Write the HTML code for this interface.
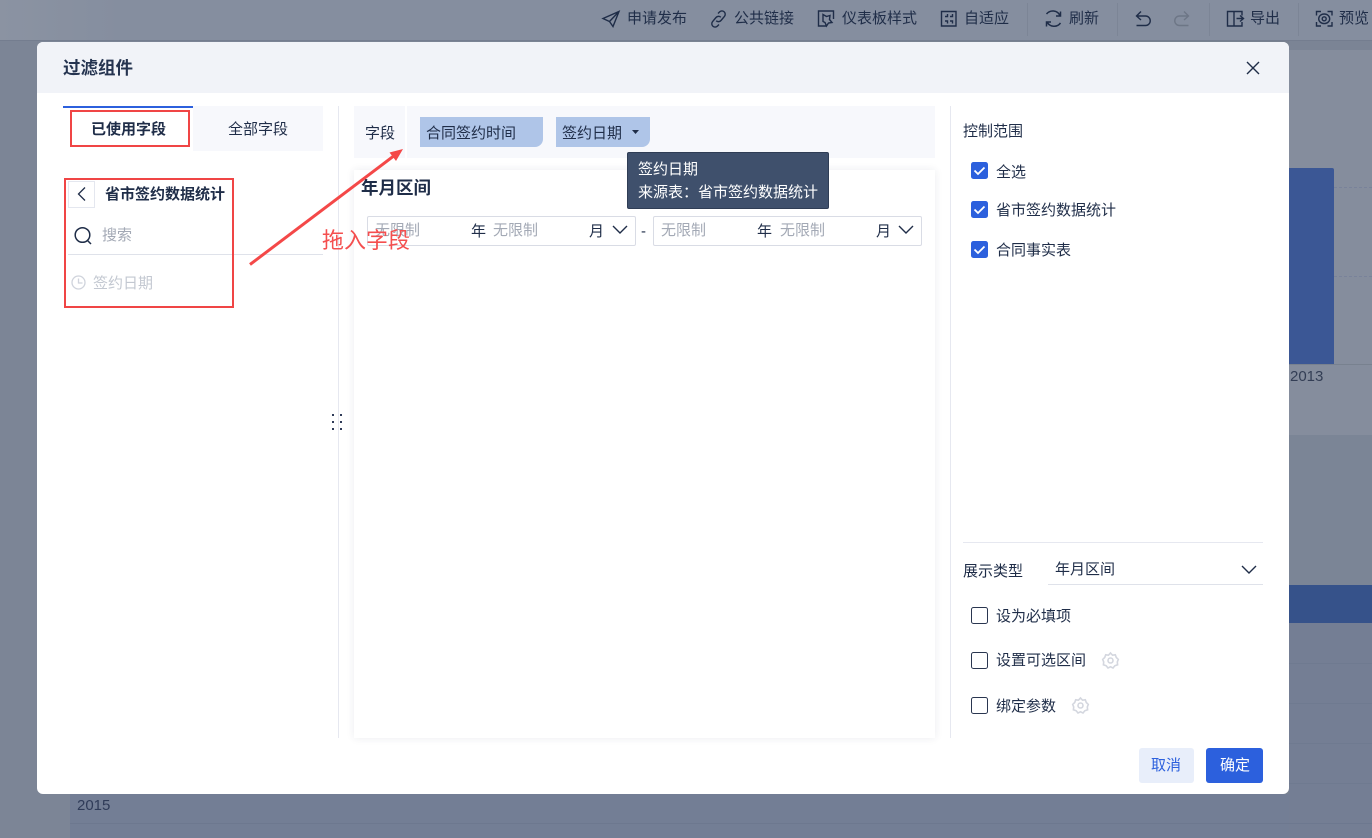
<!DOCTYPE html>
<html lang="zh"><head><meta charset="utf-8"><title>过滤组件</title>
<style>
*{box-sizing:border-box;margin:0;padding:0}
html,body{width:1372px;height:838px;overflow:hidden}
body{position:relative;background:linear-gradient(90deg,#7c8596,#78818f);font-family:"Liberation Sans","Noto Sans CJK SC",sans-serif;font-size:15px;color:#1f2d48}
.a{position:absolute}
.t{position:absolute;white-space:nowrap;line-height:20px;font-size:15px}
svg{position:absolute;overflow:visible}
.cb{position:absolute;left:971px;width:17px;height:17px;border-radius:2.5px;background:#2c60dd}
.ub{position:absolute;left:971px;width:17px;height:17px;border-radius:2.5px;border:1.3px solid #2a3650;background:#fff}
.ph{color:#a3a9b5}
</style></head><body>
<div class="a" style="left:0;top:0;width:1372px;height:41px;background:linear-gradient(90deg,#8b93a2,#858e9f 120px);border-bottom:1px solid #747d8f"></div>
<div class="a" style="left:1289px;top:41px;width:83px;height:9px;background:#7b8495"></div>
<div class="a" style="left:1289px;top:50px;width:83px;height:385px;background:#858d9d"></div>
<div class="a" style="left:1289px;top:435px;width:83px;height:150px;background:#7b8596"></div>
<div class="a" style="left:1289px;top:585px;width:83px;height:38px;background:#36528a"></div>
<div class="a" style="left:1289px;top:623px;width:83px;height:215px;background:#747e94"></div>
<div class="a" style="left:70px;top:794px;width:1219px;height:44px;background:#737e95"></div>
<div class="a" style="left:70px;top:823px;width:1302px;height:1px;background:#6d788f"></div>
<div class="a" style="left:1289px;top:663px;width:83px;height:1px;background:#6f7a90"></div>
<div class="a" style="left:1289px;top:703px;width:83px;height:1px;background:#6f7a90"></div>
<div class="a" style="left:1289px;top:743px;width:83px;height:1px;background:#6f7a90"></div>
<div class="a" style="left:1289px;top:783px;width:83px;height:1px;background:#6f7a90"></div>
<div class="a" style="left:1289px;top:168px;width:45px;height:196px;background:#3b5795;border-radius:0 2px 0 0"></div>
<div class="a" style="left:1334px;top:187px;width:38px;border-top:1px dashed #79829a"></div>
<div class="a" style="left:1334px;top:276px;width:38px;border-top:1px dashed #79829a"></div>
<div class="a" style="left:1289px;top:364px;width:83px;height:1px;background:#78818f"></div>
<div class="t" style="left:1290px;top:367px;color:#333e55">2013</div>
<div class="t" style="left:77px;top:796px;color:#2f3b58">2015</div>

<!-- toolbar -->
<svg style="left:0;top:0" width="1372" height="41" fill="none" stroke="#1f2d48" stroke-width="1.400">
<path d="M603 18.500L619 11.500 613 26.500 609.500 21.500zM609.500 21.500L619 11.500"/>
<path d="M718 13.500l1.500-1.500a3.300 3.300 0 0 1 5 4.300l-3.500 4.200a3.300 3.300 0 0 1-4.800.2M719 24.500l-1.500 1.500a3.300 3.300 0 0 1-5-4.300l3.500-4.200a3.300 3.300 0 0 1 4.800-.2"/>
<path d="M833.500 19V11h-15v15h8M823 14.500l3.500 2 3.500-1-.5 4 2.500 3-3.500.5-2 3-1.500-3.500-2-1z"/>
<path d="M941.500 11.500h14.500v14.500h-14.500zM945 16.500h2.500v-2.500M952.500 14v2.500h-2.500M945 21h2.500v2.500M952.500 23.500V21h-2.500"/>
<path d="M1060 15.500a8 8 0 0 0-13.500-1.500M1047 22a8 8 0 0 0 13.500 1M1060.500 11.500v4.500h-4.500M1046.500 26.500V22h4.500" stroke-width="1.500"/>
<path d="M1141 11.500l-4.500 4.500 4.500 4M1136.500 16h9a4.500 4.500 0 0 1 0 9.500h-9"/>
<path d="M1184 11.500l4.500 4.500-4.500 4M1188.500 16h-9a4.500 4.500 0 0 0 0 9.500h9" stroke="#6d7686"/>
<path d="M1227.500 11.500h6.500v14.500h-6.500zM1234 11.500h8v4M1234 26h8v-4M1236.500 18.500h7M1240 15.500l3.500 3-3.500 3"/>
<path d="M1316.500 15.500v-4h4.500M1327.500 11.500h4.500v4M1332 22v4h-4.500M1321 26h-4.500v-4"/>
<ellipse cx="1324.200" cy="18.800" rx="5.500" ry="4.800"/><circle cx="1324.200" cy="18.800" r="2"/>
</svg>
<div class="t" style="left:627px;top:9px">申请发布</div>
<div class="t" style="left:734px;top:9px">公共链接</div>
<div class="t" style="left:842px;top:9px">仪表板样式</div>
<div class="t" style="left:964px;top:9px">自适应</div>
<div class="t" style="left:1069px;top:9px">刷新</div>
<div class="t" style="left:1250px;top:9px">导出</div>
<div class="t" style="left:1339px;top:9px">预览</div>
<div class="a" style="left:1027px;top:3px;width:1px;height:33px;background:#7c8596"></div>
<div class="a" style="left:1117px;top:3px;width:1px;height:33px;background:#7c8596"></div>
<div class="a" style="left:1209px;top:3px;width:1px;height:33px;background:#7c8596"></div>
<div class="a" style="left:1298px;top:3px;width:1px;height:33px;background:#7c8596"></div>

<!-- modal -->
<div class="a" style="left:37px;top:42px;width:1252px;height:752px;background:#fff;border-radius:6px;overflow:hidden">
<div class="a" style="left:0;top:0;width:1252px;height:51px;background:#f1f3f8"></div>
</div>
<div class="t" style="left:63px;top:58px;font-size:17.500px;font-weight:700;color:#253450">过滤组件</div>
<svg style="left:1246px;top:61px" width="14" height="14" fill="none" stroke="#1f2d48" stroke-width="1.400"><path d="M1 1l12 12M13 1L1 13"/></svg>

<!-- left tabs -->
<div class="a" style="left:193px;top:106px;width:130px;height:45px;background:#f7f8fc"></div>
<div class="a" style="left:63px;top:106px;width:130px;height:2px;background:#2c60dd"></div>
<div class="t" style="left:91px;top:120px;font-weight:700;color:#1f2d48">已使用字段</div>
<div class="t" style="left:228px;top:120px">全部字段</div>
<div class="a" style="left:70px;top:110px;width:120px;height:37px;border:2px solid #f04545"></div>

<div class="a" style="left:68px;top:181px;width:27px;height:27px;border:1px solid #e4e7ef"></div>
<svg style="left:77px;top:186px" width="10" height="16" fill="none" stroke="#1f2d48" stroke-width="1.300"><path d="M8 1.500L1.500 8 8 14.500"/></svg>
<div class="t" style="left:105px;top:185px;font-weight:700">省市签约数据统计</div>
<svg style="left:74px;top:227px" width="18" height="18" fill="none" stroke="#1f2d48" stroke-width="1.500"><circle cx="8.500" cy="8" r="7.300"/><path d="M13.500 13.500l3.500 3.500"/></svg>
<div class="t ph" style="left:102px;top:226px">搜索</div>
<div class="a" style="left:68px;top:254px;width:255px;height:1px;background:#dfe2ea"></div>
<svg style="left:71px;top:275px" width="15" height="15" fill="none" stroke="#cfd3dc" stroke-width="1.300"><circle cx="7.500" cy="7.500" r="6.500"/><path d="M7.500 3.500v4.500h4"/></svg>
<div class="t" style="left:93px;top:274px;color:#c3c8d1">签约日期</div>
<div class="a" style="left:64px;top:178px;width:170px;height:130px;border:2px solid #f04545"></div>

<!-- dividers -->
<div class="a" style="left:338px;top:106px;width:1px;height:632px;background:#e6e8f0"></div>
<div class="a" style="left:950px;top:106px;width:1px;height:632px;background:#e6e8f0"></div>
<svg style="left:331px;top:413px" width="14" height="18" fill="#2f3b58">
<rect x="1" y="1" width="2" height="2"/><rect x="9" y="1" width="2" height="2"/><rect x="1" y="8" width="2" height="2"/><rect x="9" y="8" width="2" height="2"/><rect x="1" y="15" width="2" height="2"/><rect x="9" y="15" width="2" height="2"/>
</svg>

<!-- field bar -->
<div class="a" style="left:354px;top:106px;width:581px;height:52px;background:#f7f8fc"></div>
<div class="a" style="left:405px;top:106px;width:2px;height:52px;background:#fff"></div>
<div class="t" style="left:365px;top:124px">字段</div>
<div class="a" style="left:420px;top:117px;width:123px;height:30px;background:#afc5e8;border-radius:0 0 8px 0"></div>
<div class="t" style="left:426px;top:124px">合同签约时间</div>
<div class="a" style="left:556px;top:117px;width:94px;height:30px;background:#afc5e8;border-radius:0 0 8px 0"></div>
<div class="t" style="left:562px;top:124px">签约日期</div>
<svg style="left:632px;top:130px" width="7" height="4" fill="#1f2d48"><path d="M0 0h7L3.500 4z"/></svg>

<!-- canvas -->
<div class="a" style="left:354px;top:170px;width:581px;height:568px;background:#fff;box-shadow:0 0 8px rgba(30,45,80,.09)"></div>
<div class="t" style="left:361px;top:178px;font-size:17.500px;font-weight:700;color:#1f2d48">年月区间</div>
<div class="a" style="left:367px;top:216px;width:269px;height:30px;border:1px solid #d9dce5;border-radius:2px"></div>
<div class="a" style="left:653px;top:216px;width:269px;height:30px;border:1px solid #d9dce5;border-radius:2px"></div>
<div class="t ph" style="left:375px;top:221px">无限制</div>
<div class="t" style="left:471px;top:222px">年</div>
<div class="t ph" style="left:493px;top:221px">无限制</div>
<div class="t" style="left:589px;top:222px">月</div>
<svg style="left:612px;top:225px" width="16" height="10" fill="none" stroke="#1f2d48" stroke-width="1.400"><path d="M1 1l7 7 7-7"/></svg>
<div class="t" style="left:641px;top:222px">-</div>
<div class="t ph" style="left:661px;top:221px">无限制</div>
<div class="t" style="left:757px;top:222px">年</div>
<div class="t ph" style="left:780px;top:221px">无限制</div>
<div class="t" style="left:876px;top:222px">月</div>
<svg style="left:898px;top:225px" width="16" height="10" fill="none" stroke="#1f2d48" stroke-width="1.400"><path d="M1 1l7 7 7-7"/></svg>

<!-- tooltip -->
<div class="a" style="left:627px;top:152px;width:202px;height:57px;background:#3f506c;border-radius:2px;border:1px solid #2f3d55"></div>
<div class="t" style="left:638px;top:160px;color:#fff">签约日期</div>
<div class="t" style="left:638px;top:183px;color:#fff">来源表：省市签约数据统计</div>

<!-- arrow and annotation -->
<svg style="left:0;top:0" width="1372" height="838" fill="none">
<path d="M250 264.500L395 155" stroke="#f44848" stroke-width="3"/>
<path d="M403 149l-13.500 3.500 6.500 8.500z" fill="#f44848"/>
</svg>
<div class="t" style="left:322px;top:227px;font-size:22px;line-height:27px;color:#f44f4f">拖入字段</div>

<!-- right panel -->
<div class="t" style="left:963px;top:122px">控制范围</div>
<div class="cb" style="top:162px"></div>
<div class="cb" style="top:201px"></div>
<div class="cb" style="top:241px"></div>
<svg style="left:971px;top:162px" width="17" height="100" fill="none" stroke="#fff" stroke-width="1.800">
<path d="M3.500 8.500l3.500 3.500 6.500-6.500"/><path d="M3.500 47.500l3.500 3.500 6.500-6.500"/><path d="M3.500 87.500l3.500 3.500 6.500-6.500"/>
</svg>
<div class="t" style="left:996px;top:163px">全选</div>
<div class="t" style="left:996px;top:201px">省市签约数据统计</div>
<div class="t" style="left:996px;top:241px">合同事实表</div>

<div class="a" style="left:963px;top:542px;width:300px;height:1px;background:#e6e8f0"></div>
<div class="t" style="left:963px;top:562px">展示类型</div>
<div class="t" style="left:1055px;top:560px">年月区间</div>
<div class="a" style="left:1048px;top:584px;width:215px;height:1px;background:#dfe2ea"></div>
<svg style="left:1241px;top:565px" width="16" height="10" fill="none" stroke="#1f2d48" stroke-width="1.400"><path d="M1 1l7 7 7-7"/></svg>

<div class="ub" style="top:607px"></div>
<div class="t" style="left:996px;top:607px">设为必填项</div>
<div class="ub" style="top:652px"></div>
<div class="t" style="left:996px;top:651px">设置可选区间</div>
<div class="ub" style="top:697px"></div>
<div class="t" style="left:996px;top:697px">绑定参数</div>
<svg style="left:1102px;top:652px" width="17" height="17" fill="none" stroke="#d4d7df" stroke-width="1.600"><path d="M8.500 1l2 2.200 2.800-.4 1 2.700 2 1.900-1 2.600.3 2.800-2.800 1-1.800 2.200-2.500-1.200-2.500 1.200-1.800-2.200-2.800-1 .3-2.800-1-2.600 2-1.900 1-2.700 2.800.4z"/><circle cx="8.500" cy="8.500" r="2.500"/></svg>
<svg style="left:1072px;top:697px" width="17" height="17" fill="none" stroke="#d4d7df" stroke-width="1.600"><path d="M8.500 1l2 2.200 2.800-.4 1 2.700 2 1.900-1 2.600.3 2.800-2.800 1-1.800 2.200-2.500-1.200-2.500 1.200-1.800-2.200-2.800-1 .3-2.800-1-2.600 2-1.900 1-2.700 2.800.4z"/><circle cx="8.500" cy="8.500" r="2.500"/></svg>

<!-- buttons -->
<div class="a" style="left:1139px;top:748px;width:55px;height:35px;background:#e8eefa;border-radius:3px"></div>
<div class="t" style="left:1151px;top:756px;color:#2c60dd">取消</div>
<div class="a" style="left:1206px;top:748px;width:57px;height:35px;background:#2c60dd;border-radius:3px"></div>
<div class="t" style="left:1220px;top:756px;color:#fff">确定</div>
</body></html>
